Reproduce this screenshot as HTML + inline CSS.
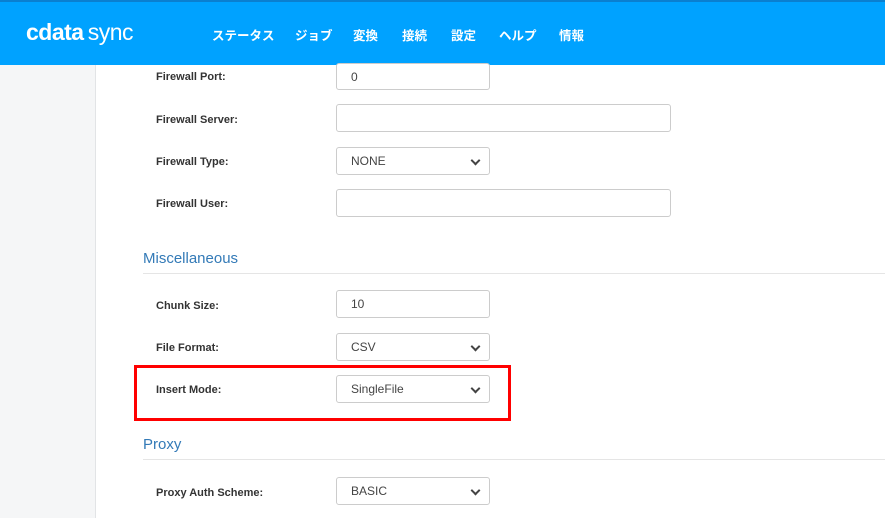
<!DOCTYPE html>
<html><head><meta charset="utf-8"><style>
*{box-sizing:border-box;margin:0;padding:0}
body{width:885px;height:518px;overflow:hidden;background:#fff;font-family:"Liberation Sans","Noto Sans CJK JP",sans-serif;position:relative}
.hdr{position:absolute;left:0;top:0;width:885px;height:65px;background:#00a2ff;border-top:2px solid #0a7fd0}
.side{position:absolute;left:0;top:65px;width:96px;height:453px;background:#f5f6f7;border-right:1px solid #e2e4e6}
.logo{position:absolute;left:26px;top:19px;color:#fff;font-size:23px;letter-spacing:-0.5px}
.nav{position:absolute;top:25px;color:#fff;font-size:12.5px;font-weight:bold}
.lbl{position:absolute;left:156px;font-size:11px;font-weight:bold;color:#333}
.in{position:absolute;left:336px;height:28px;border:1px solid #ccc;border-radius:3px;font-size:12px;color:#444;padding:6px 0 0 14px;background:#fff}
.sel::after{content:"";position:absolute;right:10px;top:9px;width:5px;height:5px;border-right:2px solid #444;border-bottom:2px solid #444;transform:rotate(45deg)}
.h{position:absolute;left:143px;font-size:15px;color:#337ab7}
.line{position:absolute;left:143px;width:742px;height:1px;background:#e5e5e5}
.red{position:absolute;left:134px;top:365px;width:377px;height:56px;border:3px solid #f00}
</style></head><body>
<div class="hdr"></div>
<div class="logo"><b>cdata</b><span style="font-weight:normal">&#8201;sync</span></div>
<div class="nav" style="left:212px">ステータス</div>
<div class="nav" style="left:295px">ジョブ</div>
<div class="nav" style="left:353px">変換</div>
<div class="nav" style="left:402px">接続</div>
<div class="nav" style="left:451px">設定</div>
<div class="nav" style="left:499px">ヘルプ</div>
<div class="nav" style="left:559px">情報</div>
<div class="side"></div>

<div class="lbl" style="top:71px">Firewall Port:</div>
<div class="in" style="top:63px;width:154px;height:27px">0</div>
<div class="lbl" style="top:114px">Firewall Server:</div>
<div class="in" style="top:104px;width:335px"></div>
<div class="lbl" style="top:156px">Firewall Type:</div>
<div class="in sel" style="top:147px;width:154px">NONE</div>
<div class="lbl" style="top:198px">Firewall User:</div>
<div class="in" style="top:189px;width:335px"></div>

<div class="h" style="top:250px">Miscellaneous</div>
<div class="line" style="top:273px"></div>
<div class="lbl" style="top:300px">Chunk Size:</div>
<div class="in" style="top:290px;width:154px">10</div>
<div class="lbl" style="top:342px">File Format:</div>
<div class="in sel" style="top:333px;width:154px">CSV</div>
<div class="lbl" style="top:384px">Insert Mode:</div>
<div class="in sel" style="top:375px;width:154px">SingleFile</div>
<div class="red"></div>

<div class="h" style="top:436px">Proxy</div>
<div class="line" style="top:459px"></div>
<div class="lbl" style="top:487px">Proxy Auth Scheme:</div>
<div class="in sel" style="top:477px;width:154px">BASIC</div>
</body></html>
